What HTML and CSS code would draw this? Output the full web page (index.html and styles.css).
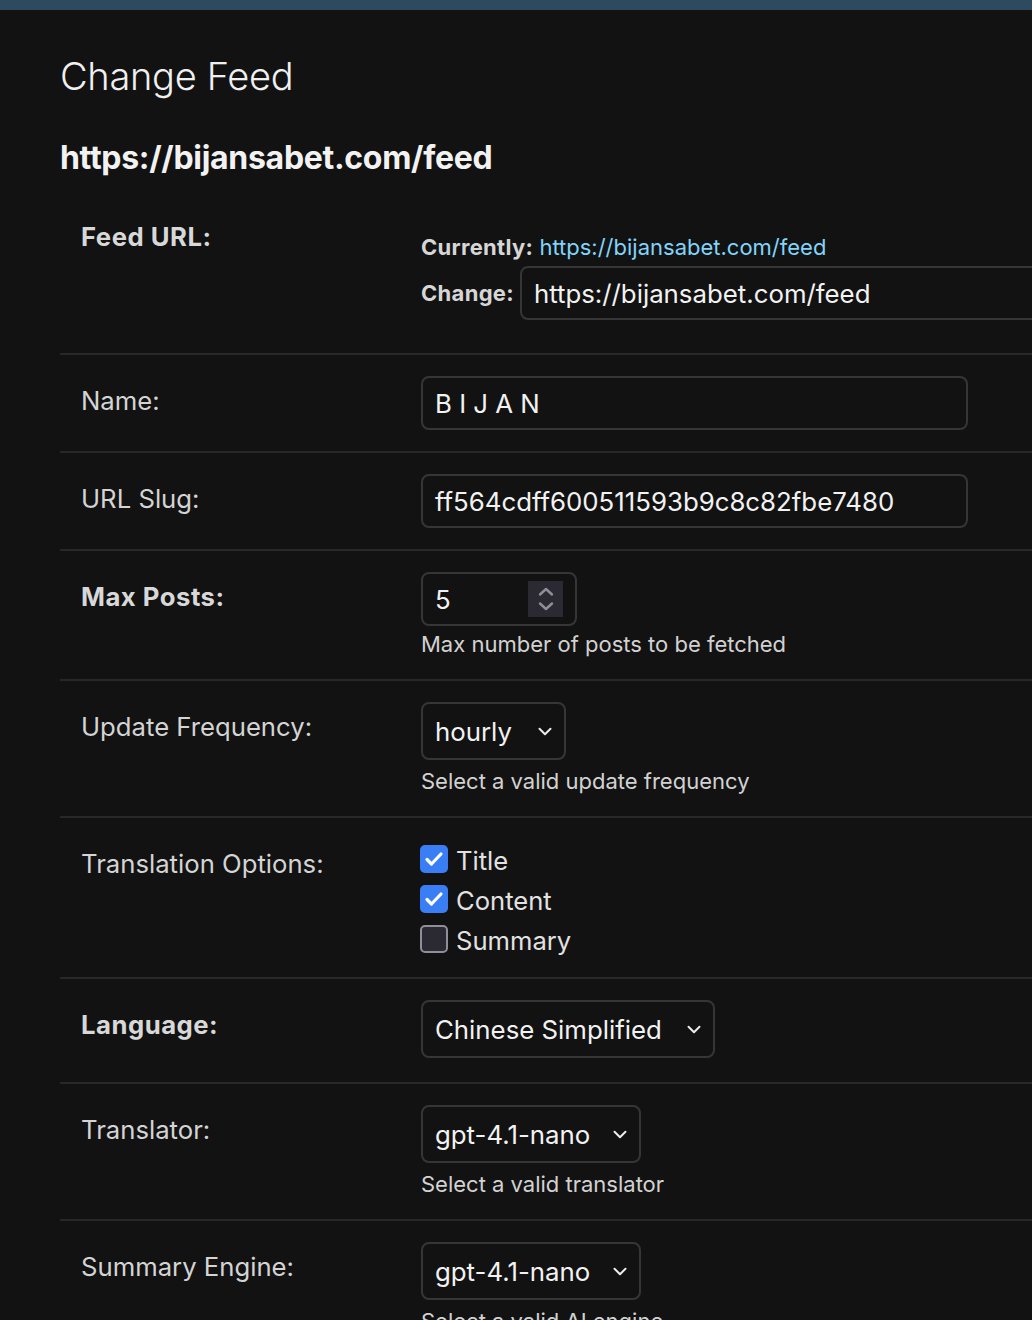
FILE: index.html
```html
<!DOCTYPE html>
<html lang="en">
<head>
<meta charset="utf-8">
<title>Change Feed</title>
<link rel="stylesheet" href="styles.css">
</head>
<body>
<div class="page">
  <div class="topbar"></div>
  <main class="content">
    <h1 class="title">Change Feed</h1>
    <h2 class="subtitle">https://bijansabet.com/feed</h2>

    <div class="form-row">
      <div class="label required">Feed URL:</div>
      <div class="field">
        <p class="url-current"><span class="url-key">Currently:</span> <a class="url-link" href="#">https://bijansabet.com/feed</a></p>
        <div class="url-change">
          <span class="url-key">Change:</span>
          <div class="input input-url">https://bijansabet.com/feed</div>
        </div>
      </div>
    </div>

    <div class="form-row">
      <div class="label">Name:</div>
      <div class="field">
        <div class="input input-text">B I J A N</div>
      </div>
    </div>

    <div class="form-row">
      <div class="label">URL Slug:</div>
      <div class="field">
        <div class="input input-text">ff564cdff600511593b9c8c82fbe7480</div>
      </div>
    </div>

    <div class="form-row">
      <div class="label required">Max Posts:</div>
      <div class="field">
        <div class="input input-number">
          <span>5</span>
          <span class="spinner">
            <svg width="16" height="26" viewBox="0 0 16 26"><path d="M2 8.5l6-5.5 6 5.5M2 17.5l6 5.5 6-5.5" fill="none" stroke="#8f8e9b" stroke-width="2.4" stroke-linecap="round" stroke-linejoin="round"/></svg>
          </span>
        </div>
        <p class="help">Max number of posts to be fetched</p>
      </div>
    </div>

    <div class="form-row">
      <div class="label">Update Frequency:</div>
      <div class="field">
        <div class="select select-freq">
          <span>hourly</span>
          <svg class="chev" width="14" height="9" viewBox="0 0 14 9"><path d="M1.5 1.8l5.5 5.4 5.5-5.4" fill="none" stroke="#ececec" stroke-width="2" stroke-linecap="round" stroke-linejoin="round"/></svg>
        </div>
        <p class="help">Select a valid update frequency</p>
      </div>
    </div>

    <div class="form-row row-checks">
      <div class="label">Translation Options:</div>
      <div class="field">
        <div class="check-line">
          <span class="box box-on"><svg width="20" height="16" viewBox="0 0 20 16"><path d="M3 8.5l4.5 4.5 9.5-10" fill="none" stroke="#fff" stroke-width="3.2" stroke-linecap="round" stroke-linejoin="round"/></svg></span>
          <span class="check-text">Title</span>
        </div>
        <div class="check-line">
          <span class="box box-on"><svg width="20" height="16" viewBox="0 0 20 16"><path d="M3 8.5l4.5 4.5 9.5-10" fill="none" stroke="#fff" stroke-width="3.2" stroke-linecap="round" stroke-linejoin="round"/></svg></span>
          <span class="check-text">Content</span>
        </div>
        <div class="check-line">
          <span class="box box-off"></span>
          <span class="check-text">Summary</span>
        </div>
      </div>
    </div>

    <div class="form-row">
      <div class="label required">Language:</div>
      <div class="field">
        <div class="select select-lang">
          <span>Chinese Simplified</span>
          <svg class="chev" width="14" height="9" viewBox="0 0 14 9"><path d="M1.5 1.8l5.5 5.4 5.5-5.4" fill="none" stroke="#ececec" stroke-width="2" stroke-linecap="round" stroke-linejoin="round"/></svg>
        </div>
      </div>
    </div>

    <div class="form-row">
      <div class="label">Translator:</div>
      <div class="field">
        <div class="select select-model">
          <span>gpt-4.1-nano</span>
          <svg class="chev" width="14" height="9" viewBox="0 0 14 9"><path d="M1.5 1.8l5.5 5.4 5.5-5.4" fill="none" stroke="#ececec" stroke-width="2" stroke-linecap="round" stroke-linejoin="round"/></svg>
        </div>
        <p class="help">Select a valid translator</p>
      </div>
    </div>

    <div class="form-row">
      <div class="label">Summary Engine:</div>
      <div class="field">
        <div class="select select-model">
          <span>gpt-4.1-nano</span>
          <svg class="chev" width="14" height="9" viewBox="0 0 14 9"><path d="M1.5 1.8l5.5 5.4 5.5-5.4" fill="none" stroke="#ececec" stroke-width="2" stroke-linecap="round" stroke-linejoin="round"/></svg>
        </div>
        <p class="help">Select a valid AI engine</p>
      </div>
    </div>
  </main>
</div>
</body>
</html>
```

FILE: styles.css
```css
html, body {
  margin: 0;
  padding: 0;
  background: #121212;
}

body {
  font-family: Inter, "Noto Sans", "Liberation Sans", sans-serif;
  color: #eeeeee;
  width: 1032px;
  height: 1320px;
  overflow: hidden;
}

.page {
  width: 1032px;
  height: 1320px;
  overflow: hidden;
}

.topbar {
  height: 10px;
  background: #2e4a5e;
}

.content {
  padding: 44px 0 0 60px;
}

.title {
  margin: 0;
  font-size: 38px;
  line-height: 44px;
  font-weight: 300;
  color: #f0f0f0;
  letter-spacing: -0.3px;
}

.subtitle {
  margin: 42px 0 0;
  font-size: 32px;
  line-height: 36px;
  font-weight: 700;
  color: #f2f2f2;
  letter-spacing: -0.3px;
}

.subtitle + .form-row {
  margin-top: 15px;
}

.form-row {
  display: flex;
  padding: 21px 0 21px 21px;
  border-bottom: 2px solid #282828;
}

.label {
  flex: 0 0 340px;
  padding-top: 10px;
  font-size: 25.7px;
  line-height: 30px;
  color: #d4d4d4;
  font-weight: 400;
}

.label.required {
  font-weight: 700;
  color: #d8d8d8;
  letter-spacing: 0.5px;
}

.field {
  display: flex;
  flex-direction: column;
  align-items: flex-start;
}

.url-current {
  margin: 21px 0 0;
  font-size: 22px;
  line-height: 28px;
  color: #d4d4d4;
}

.url-key {
  font-weight: 700;
  font-size: 22px;
  color: #d6d6d6;
  letter-spacing: 0.3px;
}

.url-link {
  color: #81d4fa;
  text-decoration: none;
}

.url-change {
  display: flex;
  align-items: center;
  gap: 6px;
  margin: 5px 0 12px;
}

.input {
  box-sizing: border-box;
  height: 54px;
  border: 2px solid #363636;
  border-radius: 8px;
  background: #121212;
  display: flex;
  align-items: center;
  padding: 0 12px;
  font-size: 25.8px;
  color: #f2f2f2;
  white-space: nowrap;
}

.input-url {
  width: 640px;
}

.input-text {
  width: 547px;
}

.input-number {
  width: 156px;
  justify-content: space-between;
  padding: 0 12px 0 12px;
}

.spinner {
  width: 35px;
  height: 36px;
  background: #2b2a33;
  display: flex;
  align-items: center;
  justify-content: center;
}

.help {
  margin: 4px 0 0;
  font-size: 22px;
  line-height: 28px;
  color: #d2d2d2;
}

.select {
  box-sizing: border-box;
  height: 58px;
  margin-bottom: 3px;
  border: 2px solid #363636;
  border-radius: 8px;
  display: flex;
  align-items: center;
  justify-content: space-between;
  padding: 0 12px 0 12px;
  font-size: 25.8px;
  color: #f2f2f2;
  white-space: nowrap;
}

.select-freq { width: 145px; }
.select-lang { width: 294px; }
.select-model { width: 220px; }

.chev {
  display: block;
}

.row-checks {
  padding-bottom: 18px;
}

.check-line {
  height: 40px;
  display: flex;
  align-items: center;
  gap: 8px;
  margin-left: -1px;
}

.box {
  box-sizing: border-box;
  width: 28px;
  height: 28px;
  border-radius: 5px;
  display: flex;
  align-items: center;
  justify-content: center;
}

.box-on {
  background: #3a7ef6;
}

.box-off {
  background: #2b2a33;
  border: 2px solid #8f8e9b;
}

.check-text {
  font-size: 25.6px;
  color: #e2e2e2;
  padding-top: 3px;
}
```
